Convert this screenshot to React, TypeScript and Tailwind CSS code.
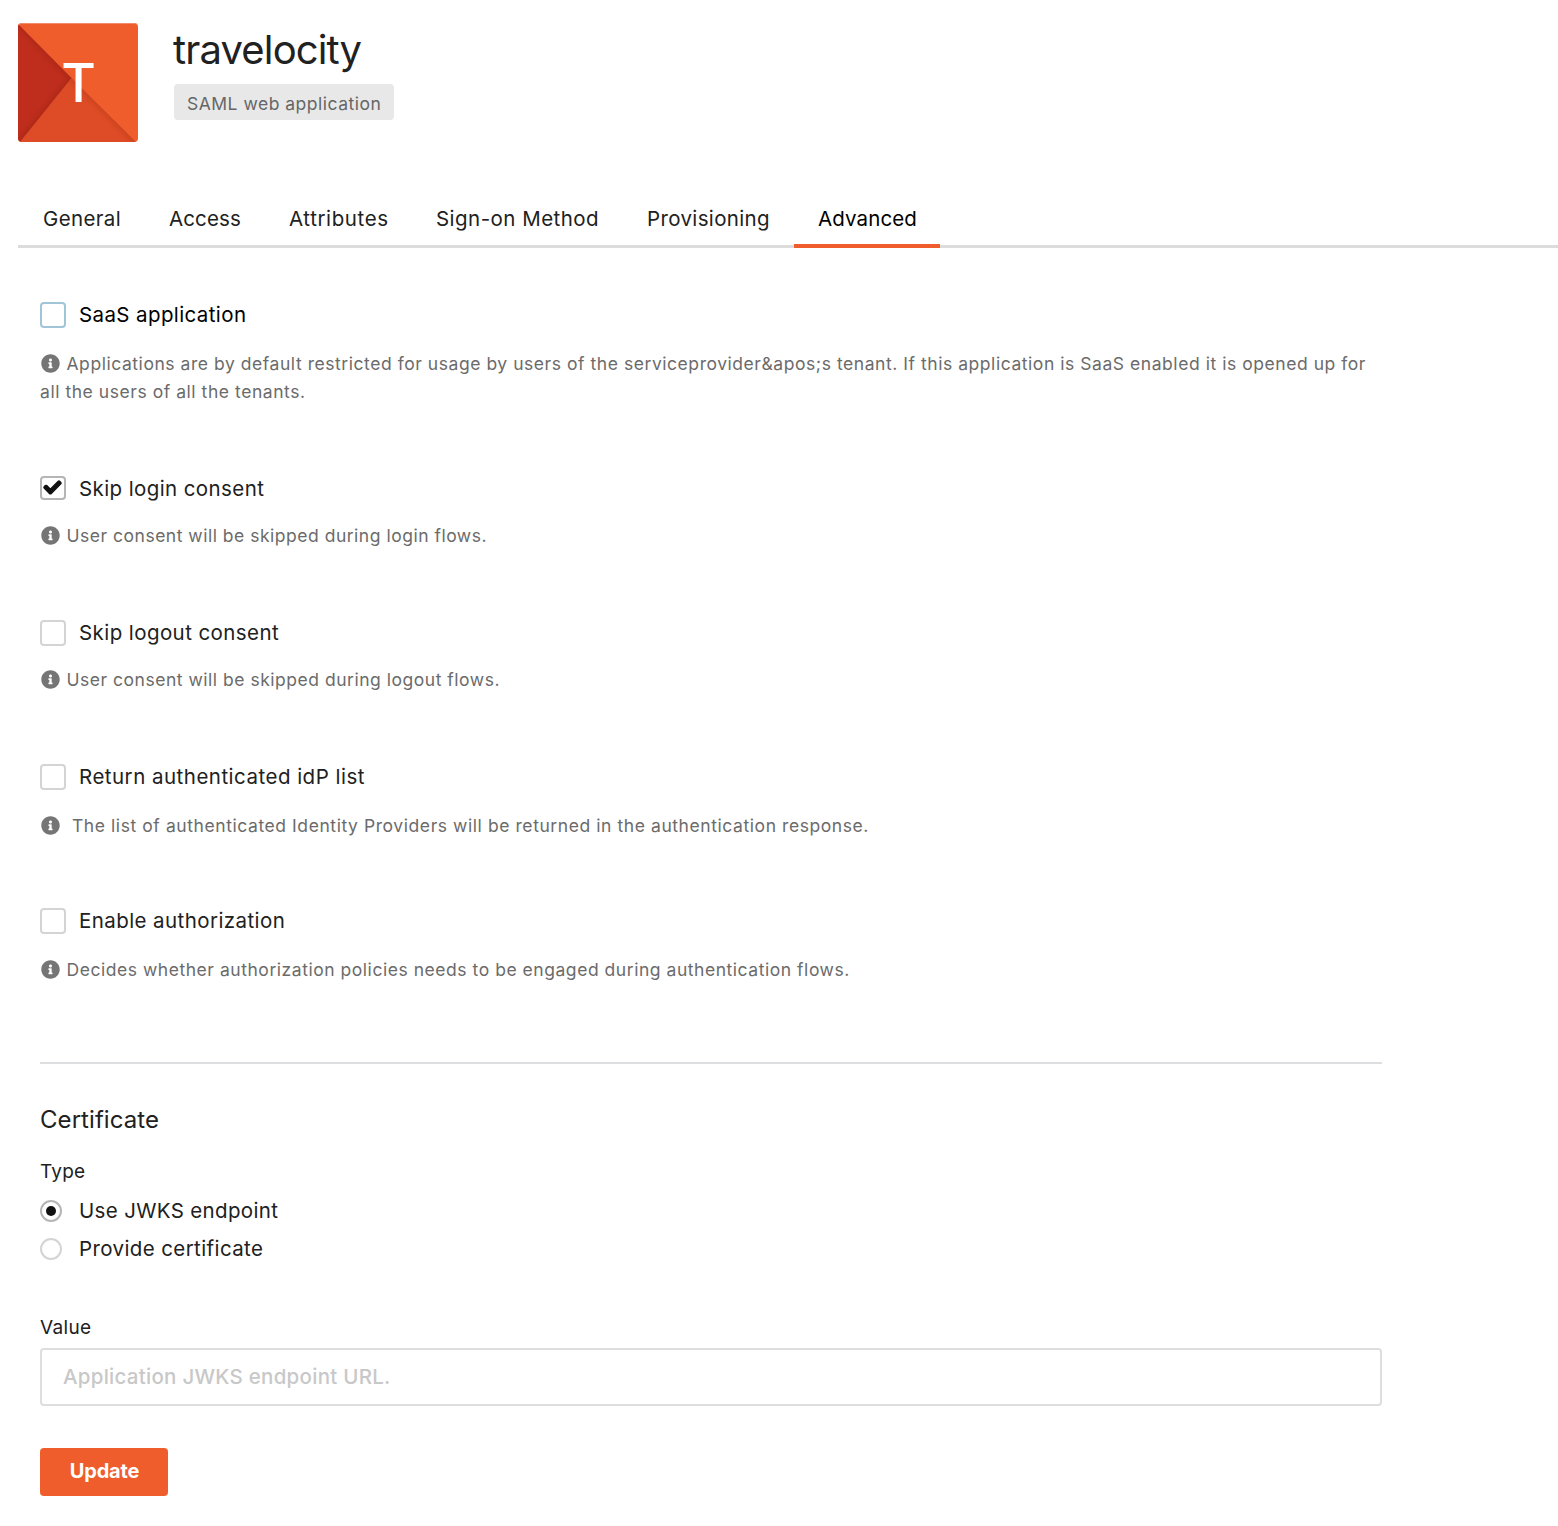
import { useState } from "react";
import { FaCheck, FaInfoCircle } from "react-icons/fa";

type Tab = { name: string; box: string };

const tabs: Tab[] = [
  { name: "General", box: "w-[127px] pl-[25px] tracking-[0.35px]" },
  { name: "Access", box: "w-[120px] pl-6 tracking-[0.12px]" },
  { name: "Attributes", box: "w-[147px] pl-6 tracking-[0.6px]" },
  { name: "Sign-on Method", box: "w-[210px] pl-6 tracking-[0.47px]" },
  { name: "Provisioning", box: "w-[172px] pl-[25px] tracking-[0.36px]" },
  { name: "Advanced", box: "w-[146px] pl-6 tracking-[0.12px]" },
];

type Option = {
  label: string;
  help: string;
  row: string;
  labelStyle: string;
  helpStyle: string;
  box: string;
};

const options: Option[] = [
  {
    label: "SaaS application",
    help: "Applications are by default restricted for usage by users of the serviceprovider&apos;s tenant. If this application is SaaS enabled it is opened up for all the users of all the tenants.",
    row: "h-[174px]",
    labelStyle: "text-black tracking-[0.39px]",
    helpStyle: "mt-[21px] tracking-[0.55px]",
    box: "mt-px h-[26px] border-[#a0c5d8]",
  },
  {
    label: "Skip login consent",
    help: "User consent will be skipped during login flows.",
    row: "h-36",
    labelStyle: "tracking-[0.4px]",
    helpStyle: "mt-[19px] tracking-[0.51px]",
    box: "mt-px h-6 border-[#b5b5b5]",
  },
  {
    label: "Skip logout consent",
    help: "User consent will be skipped during logout flows.",
    row: "h-36",
    labelStyle: "tracking-[0.42px]",
    helpStyle: "mt-[19px] tracking-[0.52px]",
    box: "mt-px h-[26px] border-[#d4d4d5]",
  },
  {
    label: "Return authenticated idP list",
    help: "\u00a0The list of authenticated Identity Providers will be returned in the authentication response.",
    row: "h-36",
    labelStyle: "tracking-[0.485px]",
    helpStyle: "mt-[21px] tracking-[0.574px]",
    box: "mt-px h-[26px] border-[#d4d4d5]",
  },
  {
    label: "Enable authorization",
    help: "Decides whether authorization policies needs to be engaged during authentication flows.",
    row: "h-36",
    labelStyle: "tracking-[0.42px]",
    helpStyle: "mt-[21px] tracking-[0.54px]",
    box: "mt-px h-[26px] border-[#d4d4d5]",
  },
];

function AppLogo() {
  return (
    <div className="relative h-[119px] w-[120px] overflow-hidden rounded-[4px] bg-[#ee5d2b] shadow-[inset_0_1px_0_#f08a68]">
      <svg viewBox="0 0 120 119" className="block h-full w-full">
        <defs>
          <filter id="soft" x="-20%" y="-20%" width="140%" height="140%">
            <feGaussianBlur stdDeviation="2.5" />
          </filter>
          <clipPath id="left">
            <path d="M0 1L53.5 55L2 119H0Z" />
          </clipPath>
          <clipPath id="bottom">
            <path d="M53.5 55L118 119H2Z" />
          </clipPath>
        </defs>
        <path d="M53.5 55L118 119H2Z" fill="#dd4c26" />
        <g clipPath="url(#bottom)">
          <path d="M53.5 55L118 119" stroke="#8e2a10" strokeWidth="4" opacity="0.3" filter="url(#soft)" />
        </g>
        <path d="M0 1L53.5 55L2 119H0Z" fill="#bf2e1d" />
        <g clipPath="url(#left)">
          <path d="M0 1L53.5 55L2 119" fill="none" stroke="#7d1a0e" strokeWidth="4" opacity="0.35" filter="url(#soft)" />
        </g>
      </svg>
      <span className="absolute inset-0 flex items-center justify-center pt-0.5 pl-px text-[53px] leading-none font-medium text-white">
        T
      </span>
    </div>
  );
}

function Radio({ label, checked, onSelect, style }: { label: string; checked: boolean; onSelect: () => void; style: string }) {
  return (
    <button type="button" role="radio" aria-checked={checked} onClick={onSelect} className="flex h-[38px] items-center">
      <span
        className={`mt-[3px] flex size-[22px] items-center justify-center rounded-full border-2 ${
          checked ? "border-[#b5b5b5]" : "border-[#d4d4d5]"
        }`}
      >
        {checked && <span className="size-2.5 rounded-full bg-[#111]" />}
      </span>
      <span className={`mt-1 ml-[17px] text-[20.5px] leading-7 ${style}`}>{label}</span>
    </button>
  );
}

export default function App() {
  const [active, setActive] = useState("Advanced");
  const [checked, setChecked] = useState<string[]>(["Skip login consent"]);
  const [type, setType] = useState("jwks");

  const toggle = (label: string) =>
    setChecked((all) => (all.includes(label) ? all.filter((l) => l !== label) : [...all, label]));

  return (
    <div className="h-[1526px] w-[1558px] overflow-hidden bg-white pl-[18px] font-['Inter',sans-serif] text-[#212121]">
      <header className="flex pt-[23px]">
        <AppLogo />
        <div className="ml-9">
          <h1 className="-ml-px h-[61px] text-[40px] leading-[53px] tracking-[-0.85px]">travelocity</h1>
          <span className="flex h-9 w-[220px] items-center rounded-[4px] bg-[#e8e8e8] pt-1 pl-[13px] text-[17.5px] tracking-[0.5px] text-[#666]">
            SAML web application
          </span>
        </div>
      </header>

      <nav className="mt-[52px] flex h-[54px] shadow-[inset_0_-3px_0_#dcdcdc]">
        {tabs.map(({ name, box }) => (
          <button
            key={name}
            type="button"
            onClick={() => setActive(name)}
            className={`h-full pb-1 text-left text-[20.5px] whitespace-nowrap ${box} ${
              active === name ? "text-black shadow-[inset_0_-4px_0_#ee5d2b]" : ""
            }`}
          >
            {name}
          </button>
        ))}
      </nav>

      <main className="ml-[22px] w-[1342px] pt-[53px]">
        {options.map((o) => (
          <section key={o.label} className={o.row}>
            <button
              type="button"
              role="checkbox"
              aria-checked={checked.includes(o.label)}
              onClick={() => toggle(o.label)}
              className="flex h-7 items-start"
            >
              <span className={`flex w-[26px] justify-center rounded-[4px] border-2 ${o.box}`}>
                {checked.includes(o.label) && (
                  <FaCheck className="mt-px mr-0.5 size-[17px] shrink-0 overflow-visible stroke-[#111] stroke-[46] text-[#111]" />
                )}
              </span>
              <span className={`ml-[13px] text-[20.5px] leading-7 ${o.labelStyle}`}>{o.label}</span>
            </button>
            <p className={`text-[17.5px] leading-7 text-[#6b6b6b] ${o.helpStyle}`}>
              <FaInfoCircle className="mr-[6.5px] ml-px inline size-[19px] align-[-2.5px] text-[#757575]" />
              {o.help}
            </p>
          </section>
        ))}

        <div className="mt-[11px] h-0.5 bg-[#dddedf]" />

        <h2 className="mt-10 text-[24px] leading-8 tracking-[0.06px]">Certificate</h2>
        <div className="mt-[22px] h-7 text-[19px] leading-7 tracking-[0.2px]">Type</div>
        <div role="radiogroup" className="mt-1">
          <Radio label="Use JWKS endpoint" checked={type === "jwks"} onSelect={() => setType("jwks")} style="tracking-[0.34px]" />
          <Radio label="Provide certificate" checked={type === "cert"} onSelect={() => setType("cert")} style="tracking-[0.39px]" />
        </div>

        <label className="mt-12 block text-[19px] leading-7 tracking-[0.33px]">Value</label>
        <input
          type="text"
          placeholder="Application JWKS endpoint URL."
          className="mt-1.5 block h-[58px] w-full rounded-[4px] border-2 border-[#dddedf] pb-px pl-[21px] text-[20.5px] font-medium tracking-[0.27px] outline-none placeholder:text-[#c8c8c8]"
        />
        <button
          type="button"
          className="mt-[42px] flex h-12 w-32 items-center justify-center rounded-[4px] bg-[#ee5d2b] pb-0.5 pl-px text-[20px] font-bold tracking-[-0.15px] text-white"
        >
          Update
        </button>
      </main>
    </div>
  );
}
